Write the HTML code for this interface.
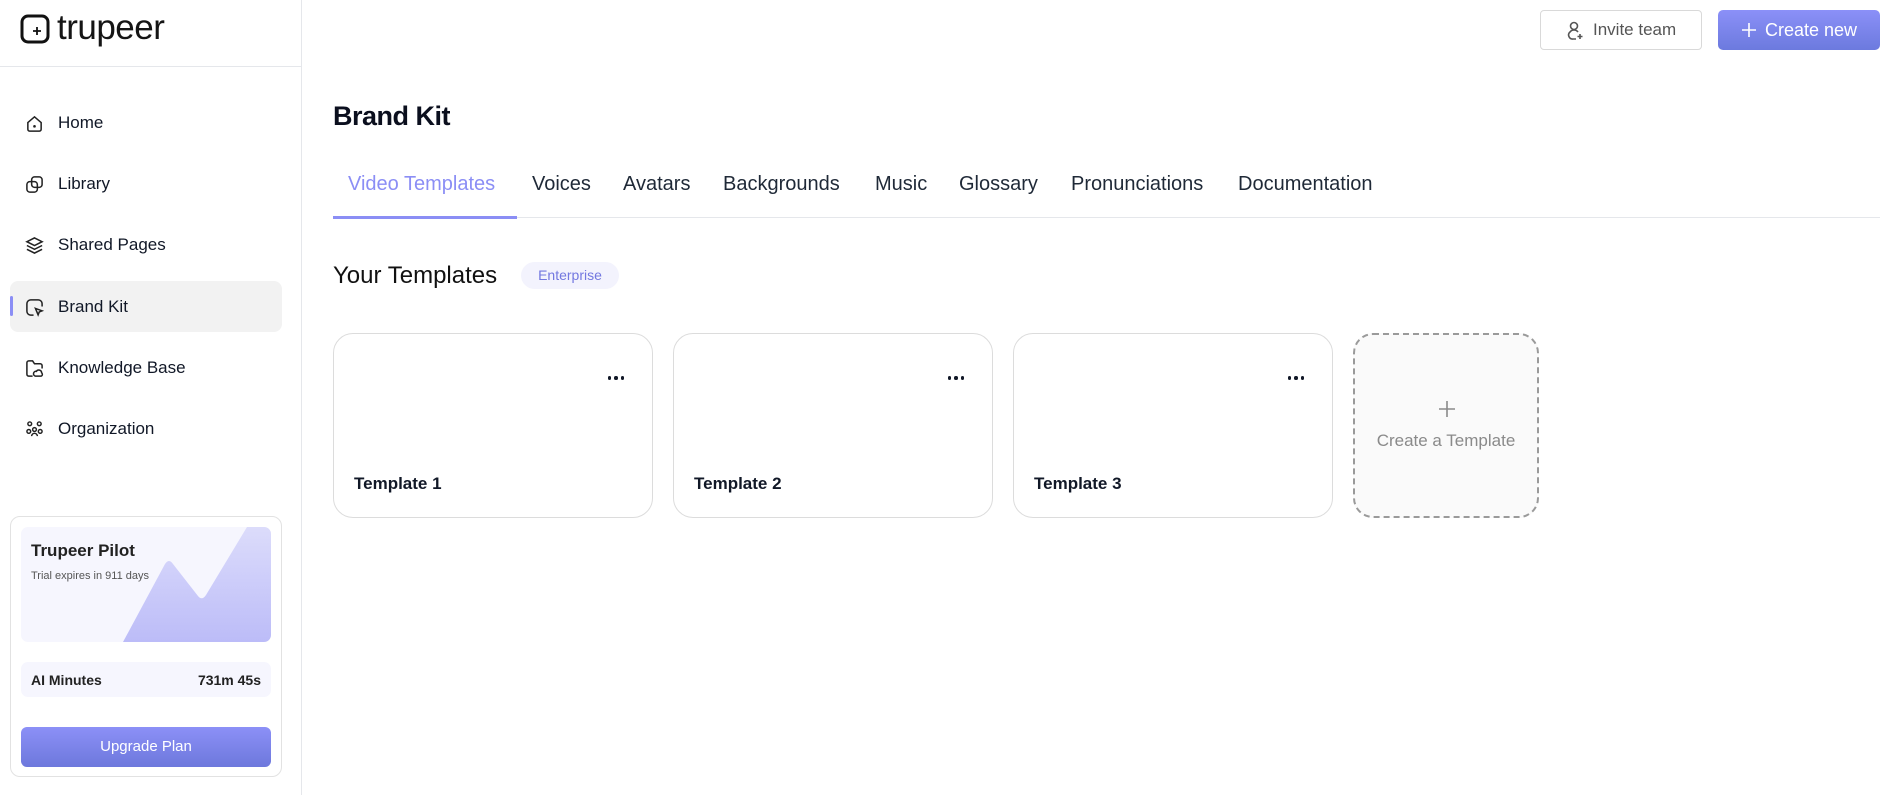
<!DOCTYPE html>
<html><head><meta charset="utf-8">
<style>
*{margin:0;padding:0;box-sizing:border-box}
body{width:1901px;height:795px;overflow:hidden;background:#fff;font-family:"Liberation Sans",sans-serif;color:#111827;position:relative}
.a{position:absolute}
.side{left:0;top:0;width:302px;height:795px;border-right:1px solid #e5e7eb}
.nav{left:0;width:302px;height:20px;font-size:17px;color:#111827;display:flex;align-items:center}
.nav svg{position:absolute;left:25px;width:19px;height:19px}
.nav span{position:absolute;left:58px}
.tab{top:173px;font-size:20px;color:#1f2937;white-space:nowrap}
.card{top:333px;height:185px;border:1px solid #dcdcdc;border-radius:20px;background:#fff}
.card .lbl{position:absolute;left:20px;top:140px;font-size:17px;font-weight:bold;color:#111827}
.card .dots{position:absolute;right:28px;top:42px;display:flex;gap:3px}
.card .dots i{width:3.5px;height:3.5px;border-radius:50%;background:#111827;display:block}
</style></head><body>
<div class="a side"></div>
<div class="a" style="left:0;top:66px;width:302px;height:1px;background:#e5e7eb"></div>
<svg class="a" style="left:20px;top:14px" width="30" height="30" viewBox="0 0 30 30"><rect x="2" y="2" width="26" height="26" rx="6" fill="none" stroke="#111" stroke-width="3"/><path d="M17 13v8M13 17h8" stroke="#111" stroke-width="1.8"/></svg>
<div class="a" style="left:57px;top:8px;font-size:35px;color:#151515;letter-spacing:-0.5px">trupeer</div>

<div class="a" style="left:10px;top:281px;width:272px;height:51px;background:#f2f2f2;border-radius:8px"></div>
<div class="a" style="left:10px;top:296px;width:3px;height:20px;background:#8b8ef5;border-radius:2px"></div>

<div class="a nav" style="top:113px"><svg viewBox="0 0 20 20" fill="none" stroke="#222" stroke-width="1.6"><path d="M3 9l7-6 7 6v7a2 2 0 0 1-2 2H5a2 2 0 0 1-2-2z"/><circle cx="10" cy="13" r=".6" fill="#222"/></svg><span>Home</span></div>
<div class="a nav" style="top:174px"><svg viewBox="0 0 20 20" fill="none" stroke="#222" stroke-width="1.6"><rect x="7" y="2" width="11" height="11" rx="3"/><rect x="2" y="7" width="11" height="11" rx="3"/></svg><span>Library</span></div>
<div class="a nav" style="top:235px"><svg viewBox="0 0 20 20" fill="none" stroke="#222" stroke-width="1.6"><path d="M10 2l8 4-8 4-8-4z"/><path d="M2 10l8 4 8-4M2 14l8 4 8-4"/></svg><span>Shared Pages</span></div>
<div class="a nav" style="top:297px"><svg viewBox="0 0 20 20" fill="none" stroke="#222" stroke-width="1.6"><path d="M9 18H6a4 4 0 0 1-4-4V6a4 4 0 0 1 4-4h8a4 4 0 0 1 4 4v3"/><path d="M11 11l7 2.5-3 1.2-1.2 3z"/></svg><span>Brand Kit</span></div>
<div class="a nav" style="top:358px"><svg viewBox="0 0 20 20" fill="none" stroke="#222" stroke-width="1.6"><path d="M8 18H4a2 2 0 0 1-2-2V4a2 2 0 0 1 2-2h4l2 3h6a2 2 0 0 1 2 2v3"/><path d="M11 18a2.5 2.5 0 0 1 1-5 3 3 0 0 1 5.5 1.5A2 2 0 0 1 17 18z"/></svg><span>Knowledge Base</span></div>
<div class="a nav" style="top:419px"><svg viewBox="0 0 20 20" fill="none" stroke="#222" stroke-width="1.5"><circle cx="5" cy="4" r="2"/><circle cx="15" cy="4" r="2"/><circle cx="10" cy="10" r="2"/><circle cx="4" cy="12" r="2"/><circle cx="16" cy="12" r="2"/><path d="M7 17a3 3 0 0 1 6 0"/></svg><span>Organization</span></div>

<div class="a" style="left:10px;top:516px;width:272px;height:261px;border:1px solid #e2e2e2;border-radius:10px"></div>
<div class="a" style="left:21px;top:527px;width:250px;height:115px;background:#f6f6fe;border-radius:7px;overflow:hidden">
<svg width="250" height="115" viewBox="0 0 250 115" style="position:absolute;left:0;top:0"><defs><linearGradient id="g" x1="0" y1="0" x2="0" y2="1"><stop offset="0" stop-color="#dcdcfb"/><stop offset="1" stop-color="#bcbcf8"/></linearGradient></defs><path d="M102 115L144 37Q148 31 152 37L177 69Q181 74 185 68L226 0H250V115Z" fill="url(#g)"/></svg>
<div style="position:absolute;left:10px;top:14px;font-size:17px;font-weight:bold;color:#222">Trupeer Pilot</div>
<div style="position:absolute;left:10px;top:43px;font-size:11px;color:#555">Trial expires in 911 days</div>
</div>
<div class="a" style="left:21px;top:662px;width:250px;height:35px;background:#f6f6fe;border-radius:7px;font-size:14px;font-weight:bold;color:#222">
<span style="position:absolute;left:10px;top:10px">AI Minutes</span><span style="position:absolute;right:10px;top:10px">731m 45s</span></div>
<div class="a" style="left:21px;top:727px;width:250px;height:40px;border-radius:6px;background:linear-gradient(#8c90f7,#6d78dc);color:#fff;font-size:15px;text-align:center;line-height:40px">Upgrade Plan</div>

<div class="a" style="left:1540px;top:10px;width:162px;height:40px;border:1px solid #d9d9d9;border-radius:4px;font-size:17px;color:#555;line-height:38px;padding-left:52px">Invite team
<svg style="position:absolute;left:25px;top:10px" width="18" height="20" viewBox="0 0 18 20" fill="none" stroke="#555" stroke-width="1.6"><circle cx="8" cy="5" r="3.5"/><path d="M12 11a5 5 0 0 0-8 0 4 4 0 0 0 3 7h3"/><path d="M14 13v5M11.5 15.5h5"/></svg></div>
<div class="a" style="left:1718px;top:10px;width:162px;height:40px;border-radius:5px;background:linear-gradient(#8b90f8,#6c7ade);color:#fff;font-size:18px;line-height:40px;padding-left:47px">Create new
<svg style="position:absolute;left:24px;top:13px" width="14" height="14" viewBox="0 0 14 14" stroke="#fff" stroke-width="1.6"><path d="M7 0v14M0 7h14"/></svg></div>

<div class="a" style="left:333px;top:101px;font-size:27px;font-weight:600;color:#0b0f1e;letter-spacing:-0.5px">Brand Kit</div>

<div class="a tab" style="left:348px;color:#8b8ef5">Video Templates</div>
<div class="a tab" style="left:532px">Voices</div>
<div class="a tab" style="left:623px">Avatars</div>
<div class="a tab" style="left:723px">Backgrounds</div>
<div class="a tab" style="left:875px">Music</div>
<div class="a tab" style="left:959px">Glossary</div>
<div class="a tab" style="left:1071px">Pronunciations</div>
<div class="a tab" style="left:1238px">Documentation</div>
<div class="a" style="left:333px;top:217px;width:1547px;height:1px;background:#e5e7eb"></div>
<div class="a" style="left:333px;top:216px;width:184px;height:3px;background:#8b8ef5"></div>

<div class="a" style="left:333px;top:262px;font-size:24px;color:#111">Your Templates</div>
<div class="a" style="left:521px;top:262px;width:98px;height:27px;border-radius:14px;background:#f3f3fd;color:#7378e0;font-size:14px;text-align:center;line-height:27px">Enterprise</div>

<div class="a card" style="left:333px;width:320px"><div class="dots"><i></i><i></i><i></i></div><div class="lbl">Template 1</div></div>
<div class="a card" style="left:673px;width:320px"><div class="dots"><i></i><i></i><i></i></div><div class="lbl">Template 2</div></div>
<div class="a card" style="left:1013px;width:320px"><div class="dots"><i></i><i></i><i></i></div><div class="lbl">Template 3</div></div>
<div class="a" style="left:1353px;top:333px;width:186px;height:185px;border:2px dashed #9a9a9a;border-radius:20px;background:#fafafa;color:#8a8a8a;text-align:center">
<svg style="position:absolute;left:84px;top:66px" width="16" height="16" viewBox="0 0 16 16" stroke="#8a8a8a" stroke-width="1.6"><path d="M8 0v16M0 8h16"/></svg>
<div style="position:absolute;left:0;right:0;top:96px;font-size:17px">Create a Template</div></div>
</body></html>
